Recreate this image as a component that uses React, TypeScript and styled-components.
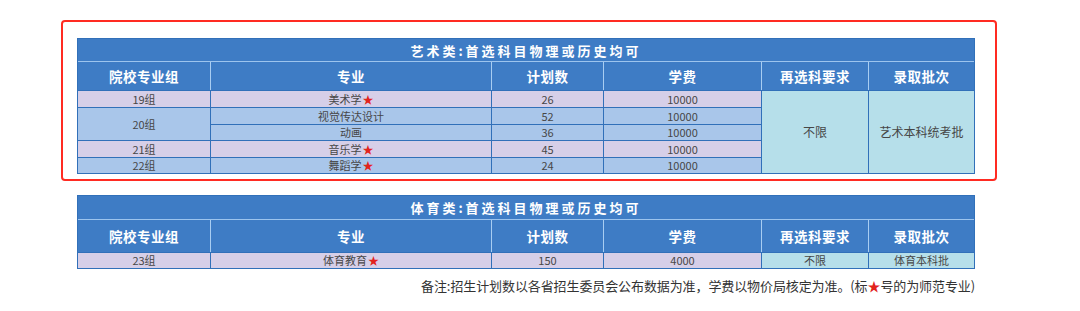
import React from 'react'
import styled, { createGlobalStyle } from 'styled-components'

const GlobalStyle = createGlobalStyle`
    body {
        margin: 0;
        background: #ffffff;
        font-family: "Noto Sans CJK SC", "Noto Sans", sans-serif;
    }
`

const COLUMNS = '132px 280px 111px 157px 106px 105px'

const tones = {
    lilac: '#d6cfe8',
    blue: '#a9c6ea',
    cyan: '#b6dfea',
}

type Tone = keyof typeof tones

const Page = styled.div`
    padding: 20px 0 0 61px;
    width: 936px;
`

const Highlight = styled.div`
    box-sizing: border-box;
    width: 936px;
    height: 161px;
    border: 2px solid #ff2b22;
    border-radius: 4px;
    padding: 16px 0 0 14px;
`

const Sheet = styled.div`
    width: 898px;
    box-sizing: border-box;
    border: 1px solid #3170b9;
    background: #3170b9;
`

const Title = styled.div<{ $height: number }>`
    height: ${(p) => p.$height}px;
    background: #3e7cc5;
    color: #ffffff;
    font-size: 13px;
    font-weight: 700;
    letter-spacing: 3px;
    display: flex;
    align-items: center;
    justify-content: center;
    border-bottom: 1px solid #9cc4ee;
`

const HeadGrid = styled.div<{ $height: number }>`
    display: grid;
    grid-template-columns: ${COLUMNS};
    grid-template-rows: ${(p) => p.$height}px;
    column-gap: 1px;
    background: #a8cdf2;
    border-bottom: 1px solid #3170b9;
`

const HeadCell = styled.div`
    background: #3e7cc5;
    color: #ffffff;
    font-size: 13.5px;
    font-weight: 700;
    letter-spacing: 0.5px;
    display: flex;
    align-items: center;
    justify-content: center;
`

const BodyGrid = styled.div<{ $rows: string }>`
    display: grid;
    grid-template-columns: ${COLUMNS};
    grid-template-rows: ${(p) => p.$rows};
    gap: 1px;
    background: #3170b9;
`

const Cell = styled.div<{ $tone: Tone; $span?: number; $size?: number }>`
    background: ${(p) => tones[p.$tone]};
    ${(p) => p.$span && `grid-row: span ${p.$span};`}
    color: #474747;
    font-size: ${(p) => p.$size ?? 11}px;
    line-height: 1;
    display: flex;
    align-items: center;
    justify-content: center;
`

const Star = styled.span`
    color: #e2231c;
    font-size: 11px;
    margin-left: 1px;
`

const Below = styled.div`
    margin: 14px 0 0 16px;
    width: 898px;
`

const Note = styled.div`
    margin-top: 7px;
    text-align: right;
    font-size: 13px;
    color: #333333;
    letter-spacing: -0.1px;
`

const heads = ['院校专业组', '专业', '计划数', '学费', '再选科要求', '录取批次']

const Head: React.FC<{ height: number }> = ({ height }) => (
    <HeadGrid $height={height}>
        {heads.map((h) => (
            <HeadCell key={h}>{h}</HeadCell>
        ))}
    </HeadGrid>
)

const artRows: { major: string; star?: boolean; plan: string; tone: Tone }[] = [
    { major: '美术学', star: true, plan: '26', tone: 'lilac' },
    { major: '视觉传达设计', plan: '52', tone: 'blue' },
    { major: '动画', plan: '36', tone: 'blue' },
    { major: '音乐学', star: true, plan: '45', tone: 'lilac' },
    { major: '舞蹈学', star: true, plan: '24', tone: 'blue' },
]

const groups: { name: string; span: number; tone: Tone; at: number }[] = [
    { name: '19组', span: 1, tone: 'lilac', at: 0 },
    { name: '20组', span: 2, tone: 'blue', at: 1 },
    { name: '21组', span: 1, tone: 'lilac', at: 3 },
    { name: '22组', span: 1, tone: 'blue', at: 4 },
]

const App: React.FC = () => (
    <>
        <GlobalStyle />
        <Page>
            <Highlight>
                <Sheet>
                    <Title $height={22}>艺术类:首选科目物理或历史均可</Title>
                    <Head height={28} />
                    <BodyGrid $rows="16px 16px 15px 16px 15px">
                        {artRows.map((r, i) => {
                            const group = groups.find((g) => g.at === i)
                            return (
                                <React.Fragment key={r.major}>
                                    {group && (
                                        <Cell
                                            $tone={group.tone}
                                            $span={group.span}
                                            style={{ gridColumn: 1 }}
                                        >
                                            {group.name}
                                        </Cell>
                                    )}
                                    <Cell $tone={r.tone} style={{ gridColumn: 2 }}>
                                        {r.major}
                                        {r.star && <Star>★</Star>}
                                    </Cell>
                                    <Cell $tone={r.tone}>{r.plan}</Cell>
                                    <Cell $tone={r.tone}>10000</Cell>
                                    {i === 0 && (
                                        <>
                                            <Cell $tone="cyan" $span={5} $size={12}>
                                                不限
                                            </Cell>
                                            <Cell $tone="cyan" $span={5} $size={12}>
                                                艺术本科统考批
                                            </Cell>
                                        </>
                                    )}
                                </React.Fragment>
                            )
                        })}
                    </BodyGrid>
                </Sheet>
            </Highlight>
            <Below>
                <Sheet>
                    <Title $height={23}>体育类:首选科目物理或历史均可</Title>
                    <Head height={32} />
                    <BodyGrid $rows="15px">
                        <Cell $tone="lilac">23组</Cell>
                        <Cell $tone="lilac">
                            体育教育
                            <Star>★</Star>
                        </Cell>
                        <Cell $tone="lilac">150</Cell>
                        <Cell $tone="lilac">4000</Cell>
                        <Cell $tone="cyan">不限</Cell>
                        <Cell $tone="cyan">体育本科批</Cell>
                    </BodyGrid>
                </Sheet>
                <Note>
                    备注:招生计划数以各省招生委员会公布数据为准，学费以物价局核定为准。(标
                    <Star style={{ fontSize: 13, marginLeft: 0 }}>★</Star>号的为师范专业)
                </Note>
            </Below>
        </Page>
    </>
)

export default App
